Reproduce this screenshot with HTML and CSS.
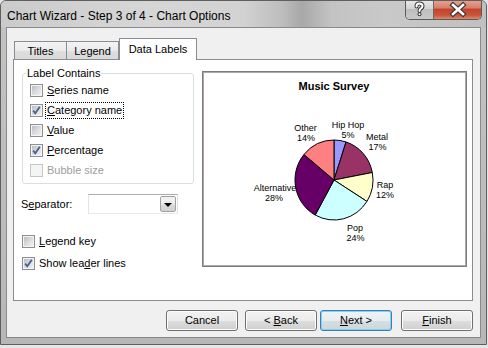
FILE: index.html
```html
<!DOCTYPE html>
<html>
<head>
<meta charset="utf-8">
<link rel="stylesheet" href="styles.css">
</head>
<body>
<div class="window">
  <div class="titlebar">
    <span class="title">Chart Wizard - Step 3 of 4 - Chart Options</span>
    <div class="caption">
      <div class="cap help">
        <svg width="27" height="19" viewBox="0 0 27 19"><path d="M10.5 6.5 Q10.5 3.5 13.5 3.5 Q16.5 3.5 16.5 6 Q16.5 7.8 14.5 8.8 Q13.5 9.4 13.5 11" fill="none" stroke="#3c3c3c" stroke-width="4" stroke-linecap="round"/><circle cx="13.5" cy="14.3" r="2" fill="#3c3c3c"/><path d="M10.5 6.5 Q10.5 3.5 13.5 3.5 Q16.5 3.5 16.5 6 Q16.5 7.8 14.5 8.8 Q13.5 9.4 13.5 11" fill="none" stroke="#fff" stroke-width="2" stroke-linecap="round"/><circle cx="13.5" cy="14.3" r="1" fill="#fff"/></svg>
      </div>
      <div class="cap close">
        <svg width="48" height="19" viewBox="0 0 48 19"><path d="M19 5 L29 14 M29 5 L19 14" stroke="#3b3b3b" stroke-width="5" stroke-linecap="square"/><path d="M19 5 L29 14 M29 5 L19 14" stroke="#fff" stroke-width="2.6" stroke-linecap="square"/></svg>
      </div>
    </div>
  </div>
  <div class="frame">
    <div class="client">
      <div class="tabs">
        <div class="tab t-titles">Titles</div>
        <div class="tab t-legend">Legend</div>
        <div class="tab active">Data Labels</div>
      </div>
      <div class="panel">
        <div class="left">
          <fieldset class="group">
            <legend>Label Contains</legend>
            <div class="row"><span class="cb"></span><span><u>S</u>eries name</span></div>
            <div class="row"><span class="cb"><svg width="11" height="11" viewBox="0 0 11 11"><path d="M2.2 5.6 L4.3 8.2 L8.8 1.8" fill="none" stroke="#4a5f8f" stroke-width="1.8"/></svg></span><span class="focus"><u>C</u>ategory name</span></div>
            <div class="row"><span class="cb"></span><span><u>V</u>alue</span></div>
            <div class="row"><span class="cb"><svg width="11" height="11" viewBox="0 0 11 11"><path d="M2.2 5.6 L4.3 8.2 L8.8 1.8" fill="none" stroke="#4a5f8f" stroke-width="1.8"/></svg></span><span><u>P</u>ercentage</span></div>
            <div class="row disabled"><span class="cb"></span><span>Bubble size</span></div>
          </fieldset>
          <div class="sep-row">
            <span class="sep-label">S<u>e</u>parator:</span>
            <div class="combo"><div class="combo-btn"><span class="tri"></span></div></div>
          </div>
          <div class="extra">
            <div class="row tall"><span class="cb"></span><span><u>L</u>egend key</span></div>
            <div class="row tall"><span class="cb"><svg width="11" height="11" viewBox="0 0 11 11"><path d="M2.2 5.6 L4.3 8.2 L8.8 1.8" fill="none" stroke="#4a5f8f" stroke-width="1.8"/></svg></span><span>Show lea<u>d</u>er lines</span></div>
          </div>
        </div>
        <div class="chart">
          <svg width="263" height="194" viewBox="0 0 263 194">
            <text x="131" y="18" class="ctitle">Music Survey</text>
            <g stroke="#000" stroke-width="1" stroke-linejoin="round">
              <path d="M131 108 L131 68 A39 40 0 0 1 143.05 69.96 Z" fill="#9999ff"/>
              <path d="M131 108 L143.05 69.96 A39 40 0 0 1 169.31 100.5 Z" fill="#993366"/>
              <path d="M131 108 L169.31 100.5 A39 40 0 0 1 163.93 129.43 Z" fill="#ffffcc"/>
              <path d="M131 108 L163.93 129.43 A39 40 0 0 1 112.21 143.05 Z" fill="#ccffff"/>
              <path d="M131 108 L112.21 143.05 A39 40 0 0 1 100.95 82.5 Z" fill="#660066"/>
              <path d="M131 108 L100.95 82.5 A39 40 0 0 1 131 68 Z" fill="#ff8080"/>
            </g>
            <g class="lbl">
              <text x="145" y="56">Hip Hop</text><text x="145" y="66">5%</text>
              <text x="102.5" y="59">Other</text><text x="103" y="69">14%</text>
              <text x="174" y="68">Metal</text><text x="174.5" y="78">17%</text>
              <text x="182" y="116">Rap</text><text x="182" y="126">12%</text>
              <text x="72" y="119">Alternative</text><text x="71" y="129">28%</text>
              <text x="152" y="159">Pop</text><text x="152.5" y="169">24%</text>
            </g>
          </svg>
        </div>
      </div>
      <div class="buttons">
        <div class="btn b-cancel">Cancel</div>
        <div class="btn b-back">&lt; <u>B</u>ack</div>
        <div class="btn b-next default"><u>N</u>ext &gt;</div>
        <div class="btn"><u>F</u>inish</div>
      </div>
    </div>
  </div>
</div>
</body>
</html>
```

FILE: styles.css
```css
html, body {
  margin: 0;
  padding: 0;
}
body {
  width: 488px;
  height: 348px;
  background: #e6e6e6;
  font-family: "Liberation Sans", Arial, sans-serif;
  font-size: 11px;
  color: #000;
  overflow: hidden;
}
.window {
  width: 487px;
  height: 345px;
  box-sizing: border-box;
  border: 1px solid #5f5f5f;
  border-radius: 6px 6px 0 0;
  background: linear-gradient(to bottom, #c4c4c4, #b7b7b7);
  display: flex;
  flex-direction: column;
  overflow: hidden;
}
.titlebar {
  height: 26px;
  flex: none;
  display: flex;
  justify-content: space-between;
  align-items: flex-start;
  background: linear-gradient(to right, #cbcbcb 0%, #d6d6d6 30%, #d2d2d2 50%, #bdbdbd 58%, #a8a8a8 62%, #c3c3c3 68%, #c9c9c9 80%, #c0c0c0 100%);
}
.title {
  font-size: 12px;
  line-height: 14px;
  padding: 8px 0 0 6px;
}
.caption {
  display: flex;
  margin-right: 4px;
  margin-top: -1px;
  border: 1px solid #5a5a5a;
  border-top: none;
  border-radius: 0 0 5px 5px;
  overflow: hidden;
}
.cap {
  height: 19px;
}
.cap svg { display: block; }
.help {
  width: 27px;
  border-right: 1px solid #6a6a6a;
  background: linear-gradient(to bottom, #e9e9e9 0%, #d4d4d4 45%, #bdbdbd 50%, #c9c9c9 100%);
}
.close {
  width: 47px;
  background: linear-gradient(to bottom, #e6a598 0%, #d7806c 40%, #c3452c 50%, #c9553c 80%, #dd8a6d 100%);
}
.frame {
  flex: 1;
  padding: 0 5px 6px 5px;
  display: flex;
}
.client {
  flex: 1;
  border: 1px solid #8a8a8a;
  background: #f0f0f0;
  padding: 10px 0 0 6px;
}
.tabs {
  display: flex;
  align-items: flex-end;
  height: 21px;
  padding-left: 1px;
}
.tab {
  box-sizing: border-box;
  height: 18px;
  border: 1px solid #898c95;
  border-bottom: none;
  background: linear-gradient(to bottom, #f3f3f3 0%, #ebebeb 50%, #dedede 55%, #d9d9d9 100%);
  text-align: center;
  line-height: 16px;
  padding-top: 1px;
}
.t-titles { width: 53px; }
.t-legend { width: 52px; margin-left: 0; border-left: none; }
.tab.active {
  width: 78px;
  height: 22px;
  margin-bottom: -1px;
  position: relative;
  z-index: 1;
  background: #fff;
  padding-top: 2px;
}
.panel {
  box-sizing: border-box;
  width: 460px;
  height: 242px;
  border: 1px solid #898c95;
  background: #fff;
  padding: 6px 0 0 8px;
  display: grid;
  grid-template-columns: 172px 265px;
  column-gap: 8px;
  align-items: start;
}
.group {
  margin: 0;
  padding: 0 0 3px 7px;
  border: 1px solid #d5dfe5;
  border-radius: 3px;
  min-width: 0;
}
.group legend {
  padding: 0 1px;
  margin-left: -4px;
  line-height: 14px;
}
.row {
  height: 20px;
  display: flex;
  align-items: center;
  gap: 4px;
  white-space: nowrap;
}
.row.tall { height: 22px; }
.row.disabled { color: #9d9d9d; }
.cb {
  flex: none;
  width: 13px;
  height: 13px;
  box-sizing: border-box;
  border: 1px solid #8e8f8f;
  background: linear-gradient(135deg, #b3b7bd 0%, #d9dbde 50%, #f7f7f7 100%);
  box-shadow: inset 0 0 0 1px #f4f4f4;
}
.cb svg { display: block; }
.row.disabled .cb {
  border-color: #c5c5c5;
  background: #f4f4f4;
  box-shadow: none;
}
.focus {
  outline: 1px dotted #000;
  outline-offset: 0;
  padding: 0 1px;
  margin-left: -1px;
  line-height: 15px;
}
.sep-row {
  display: flex;
  align-items: center;
  justify-content: space-between;
  margin-top: 10px;
  margin-left: -1px;
  width: 157px;
}
.combo {
  box-sizing: border-box;
  width: 90px;
  height: 20px;
  border: 1px solid #abadb3;
  border-color: #abadb3 #dbdfe6 #e3e9ef #e2e3ea;
  background: #fff;
  display: flex;
  justify-content: flex-end;
  padding: 1px;
}
.combo-btn {
  box-sizing: border-box;
  width: 16px;
  border: 1px solid #a2a2a2;
  border-radius: 2px;
  background: linear-gradient(to bottom, #f2f2f2 0%, #ebebeb 50%, #dddddd 55%, #cfcfcf 100%);
  display: flex;
  align-items: center;
  justify-content: center;
}
.tri {
  width: 0;
  height: 0;
  border-left: 4px solid transparent;
  border-right: 4px solid transparent;
  border-top: 4px solid #000;
  margin-top: 1px;
}
.extra {
  margin-top: 16px;
}
.chart {
  margin-top: 5px;
  width: 265px;
  height: 196px;
  box-sizing: border-box;
  border: 1px solid #7c7c7c;
  box-shadow: inset 0 0 0 1px #a9a9a9;
  background: #fff;
}
.chart svg { display: block; }
.ctitle {
  font-family: "Liberation Sans", Arial, sans-serif;
  font-weight: bold;
  font-size: 11px;
  text-anchor: middle;
}
.lbl text {
  font-family: "Liberation Sans", Arial, sans-serif;
  font-size: 9px;
  text-anchor: middle;
}
.buttons {
  width: 460px;
  display: flex;
  justify-content: flex-end;
  margin-top: 9px;
}
.btn {
  box-sizing: border-box;
  width: 72px;
  height: 21px;
  border: 1px solid #707070;
  border-radius: 3px;
  background: linear-gradient(to bottom, #f2f2f2 0%, #ebebeb 50%, #dddddd 52%, #cfcfcf 100%);
  box-shadow: inset 0 0 0 1px #fcfcfc;
  text-align: center;
  line-height: 19px;
}
.b-cancel { margin-right: 7px; }
.b-back { margin-right: 3px; }
.b-next { margin-right: 9px; }
.btn.default {
  border-color: #3c7fb1;
  box-shadow: inset 0 0 0 1px #7fd0f2;
  background: linear-gradient(to bottom, #eef3f6 0%, #e6ecf0 50%, #d7dee3 52%, #cdd5db 100%);
}
u { text-decoration: underline; text-underline-offset: 1px; }
```
